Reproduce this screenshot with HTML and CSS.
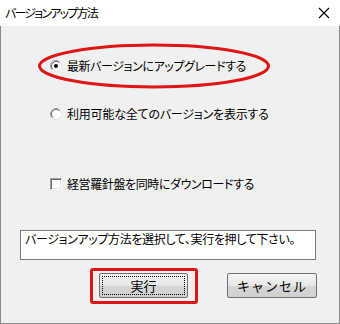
FILE: index.html
```html
<!DOCTYPE html>
<html lang="ja">
<head>
<meta charset="utf-8">
<link rel="stylesheet" href="styles.css">
</head>
<body>
<div class="window">
  <div class="titlebar">
    <span class="title">バージョンアップ方法</span>
    <svg class="close" width="12" height="12" viewBox="0 0 12 12"><path d="M1 1 L11 11 M11 1 L1 11" stroke="#000" stroke-width="1.1" fill="none"/></svg>
  </div>
  <div class="client">
    <svg class="mark-ellipse" width="234" height="46" viewBox="0 0 234 46"><ellipse cx="117" cy="23" rx="114.5" ry="21" fill="none" stroke="#e01515" stroke-width="3"/></svg>
    <div class="opt opt-first">
      <svg class="radio" width="12" height="12" viewBox="0 0 12 12">
        <circle cx="6" cy="6" r="5.5" fill="#fff" stroke="#e3e3e3"/>
        <path d="M2.11 9.89 A5.5 5.5 0 0 1 9.89 2.11" stroke="#a0a0a0" fill="none"/>
        <path d="M2.82 9.18 A4.5 4.5 0 0 1 9.18 2.82" stroke="#696969" fill="none"/>
        <circle cx="6" cy="6" r="2" fill="#000"/>
      </svg>
      <span class="label label-first">最新バージョンにアップグレードする</span>
    </div>
    <div class="opt opt-second">
      <svg class="radio" width="12" height="12" viewBox="0 0 12 12">
        <circle cx="6" cy="6" r="5.5" fill="#fff" stroke="#e3e3e3"/>
        <path d="M2.11 9.89 A5.5 5.5 0 0 1 9.89 2.11" stroke="#a0a0a0" fill="none"/>
        <path d="M2.82 9.18 A4.5 4.5 0 0 1 9.18 2.82" stroke="#696969" fill="none"/>
      </svg>
      <span class="label label-second">利用可能な全てのバージョンを表示する</span>
    </div>
    <div class="opt opt-check">
      <span class="checkbox"></span>
      <span class="label label-check">経営羅針盤を同時にダウンロードする</span>
    </div>
    <div class="msg">バージョンアップ方法を選択して、実行を押して下さい。</div>
    <div class="buttons">
      <div class="highlight"><button class="btn btn-focus"><span class="focus-ring">実行</span></button></div>
      <button class="btn btn-cancel">キャンセル</button>
    </div>
  </div>
</div>
</body>
</html>
```
FILE: styles.css
```css
* { box-sizing: border-box; }
html, body { margin: 0; padding: 0; background: #fff; }
body {
  font-family: "Noto Sans CJK JP", "Noto Sans", sans-serif;
  font-size: 12px;
  color: #000;
}
.window {
  width: 340px;
  height: 324px;
  display: flex;
  flex-direction: column;
}
.titlebar {
  height: 26px;
  background: #fff;
  display: flex;
  align-items: center;
  padding-left: 5px;
}
.title {
  font-size: 12px;
  font-feature-settings: "palt";
  letter-spacing: -1.8px;
  line-height: 14px;
}
.close {
  margin-left: auto;
  margin-right: 10px;
}
.client {
  flex: 1;
  position: relative;
  background: #f0f0f0;
  border-left: 1px solid #8a8a8a;
  border-right: 1px solid #8a8a8a;
  border-bottom: 1px solid #8a8a8a;
  padding-top: 30px;
  display: flex;
  flex-direction: column;
  align-items: flex-start;
}
.mark-ellipse {
  position: absolute;
  left: 36px;
  top: 17px;
}
.opt {
  height: 20px;
  display: flex;
  align-items: center;
  margin-left: 49px;
}
.opt-second { margin-top: 28px; }
.opt-check { margin-top: 50px; }
.radio { flex: none; }
.checkbox {
  width: 12px;
  height: 12px;
  flex: none;
  background: #fff;
  border-top: 1px solid #a0a0a0;
  border-left: 1px solid #a0a0a0;
  border-right: 1px solid #fff;
  border-bottom: 1px solid #fff;
  box-shadow: inset 1px 1px 0 #696969, inset -1px -1px 0 #e3e3e3;
}
.label {
  margin-left: 5px;
  font-feature-settings: "palt";
  line-height: 14px;
  white-space: nowrap;
}
.label-first { letter-spacing: -0.4px; }
.label-second { letter-spacing: -0.2px; }
.label-check { letter-spacing: -0.4px; }
.msg {
  margin-top: 36px;
  margin-left: 19px;
  width: 296px;
  height: 30px;
  background: #fff;
  border: 1px solid #7a7a7a;
  padding: 1px 0 0 4px;
  font-feature-settings: "palt";
  letter-spacing: -0.35px;
  line-height: 14px;
  white-space: nowrap;
}
.buttons {
  margin-top: 8px;
  margin-left: 89px;
  display: flex;
  align-items: flex-start;
}
.highlight {
  border: 3px solid #e01515;
  border-radius: 3px;
  padding: 2px 7px 3px 6px;
}
.btn {
  font-family: "Noto Sans CJK JP", "Noto Sans", sans-serif;
  font-size: 13px;
  color: #000;
  width: 89px;
  height: 25px;
  padding: 0;
  border: 1px solid #707070;
  border-radius: 2px;
  background: linear-gradient(#f6f6f6, #e6e6e6 50%, #d6d6d6 51%, #d0d0d0);
  display: flex;
  align-items: center;
  justify-content: center;
  line-height: 15px;
}
.btn-focus { padding: 2px; }
.focus-ring {
  flex: 1;
  align-self: stretch;
  display: flex;
  align-items: center;
  justify-content: center;
  border: 1px dotted #000;
}
.btn-cancel {
  width: 90px;
  margin-top: 5px;
  margin-left: 29px;
  letter-spacing: 1px;
}
```
